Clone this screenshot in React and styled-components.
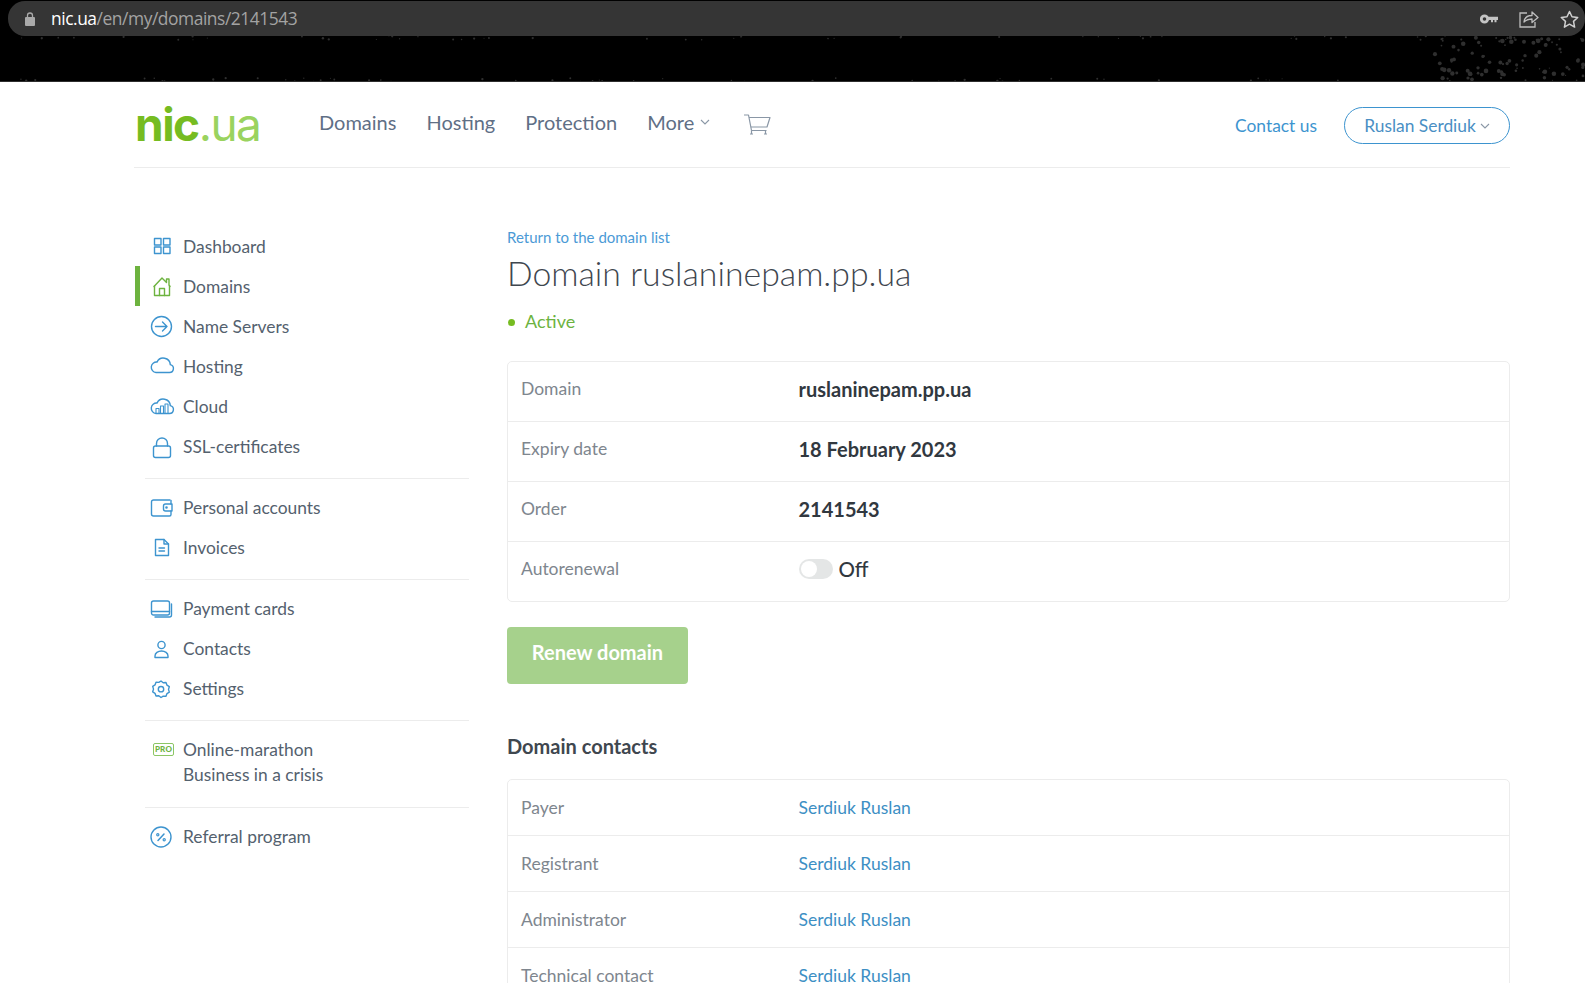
import React from 'react';
import styled, { createGlobalStyle } from 'styled-components';

const GlobalStyle = createGlobalStyle`
  html, body {
    margin: 0;
    padding: 0;
    height: 983px;
    overflow: hidden;
    background: #fff;
    font-family: Lato, "Open Sans", sans-serif;
    color: #54616e;
  }
  * { box-sizing: border-box; }
`;

const BLUE = '#3d94cf';

const IconSvg = styled.svg`
  overflow: visible;
`;

const Icon = ({ children, color = BLUE }) => (
  <IconSvg width="24" height="24" viewBox="0 0 24 24" fill="none" stroke={color} strokeWidth="1.4" strokeLinejoin="round" strokeLinecap="round">
    {children}
  </IconSvg>
);

const CLOUD = 'M6 18.500h13.500a4 4 0 0 0 .8-7.900 7 7 0 0 0-13.300-2.500A5.200 5.200 0 0 0 6 18.500Z';

const icons = {
  dashboard: (
    <Icon>
      <rect x="4.500" y="4.500" width="6.500" height="6.500" />
      <rect x="13.500" y="4.500" width="6.500" height="6.500" />
      <rect x="4.500" y="13" width="6.500" height="6.500" />
      <rect x="13.500" y="13" width="6.500" height="6.500" />
    </Icon>
  ),
  home: (
    <Icon color="#6db33f">
      <path d="M4 12.500 12 4l4.500 4.500V5h2.500v6l1 1.500" />
      <path d="M4.500 12v9.500h15V12" />
      <path d="M9.500 21.500v-7h5v7" />
    </Icon>
  ),
  servers: (
    <Icon>
      <circle cx="11.500" cy="12.500" r="10" />
      <path d="M5.500 12.500h11.500M12.500 8 17 12.500 12.500 17" />
    </Icon>
  ),
  hosting: (
    <Icon>
      <path d={CLOUD} />
    </Icon>
  ),
  cloud: (
    <Icon>
      <path d={CLOUD} transform="translate(0 1)" />
      <path d="M6 19v-4.500h3V19M10.500 19v-7h3v7M15 19v-9h3v9" strokeWidth="1.100" />
    </Icon>
  ),
  lock: (
    <Icon>
      <rect x="3.500" y="12" width="17" height="11.500" rx="2" />
      <path d="M6.500 12v-2.500a5.500 5.500 0 0 1 11 0V12" />
    </Icon>
  ),
  wallet: (
    <Icon>
      <path d="M20 5H3.500A2 2 0 0 0 1.500 7v12a2 2 0 0 0 2 2h16a1.500 1.500 0 0 0 1.500-1.500V16" />
      <path d="M22 9H15.500a2 2 0 0 0-2 2v3a2 2 0 0 0 2 2H22Z" />
      <circle cx="16.500" cy="12.500" r=".6" />
      <path d="M21 5.500V9" />
    </Icon>
  ),
  invoice: (
    <Icon>
      <path d="M5.500 4.500h8.500l4.500 4.500v11.500h-13Z" />
      <path d="M14 4.500V9h4.500M9 13h5.500M9 16h5.500" />
    </Icon>
  ),
  cards: (
    <Icon>
      <rect x="1.500" y="5" width="18" height="14" rx="2" />
      <path d="M1.500 15.500h18M21.500 8v11a2 2 0 0 1-2 2H5" />
    </Icon>
  ),
  contact: (
    <Icon>
      <circle cx="11.500" cy="9" r="3.600" />
      <path d="M5 21.500V20c0-3 3-5 6.500-5s6.500 2 6.500 5v1.500Z" />
    </Icon>
  ),
  settings: (
    <Icon>
      <g transform="translate(-1 1)">
        <path d="M12 4l2.200 1.700 2.800-.2 1 2.700 2.300 1.500-.8 2.700.8 2.700-2.300 1.500-1 2.700-2.800-.2L12 20.500l-2.200-1.700-2.800.2-1-2.700-2.300-1.500.8-2.700-.8-2.700 2.300-1.500 1-2.700 2.800.2Z" />
        <circle cx="12" cy="12.200" r="2.700" />
      </g>
    </Icon>
  ),
  percent: (
    <Icon>
      <g transform="translate(-1 1)">
        <circle cx="12" cy="12" r="10" />
        <path d="M9 15.500 15 9" strokeWidth="1.500" />
        <circle cx="8.800" cy="9.800" r="1.100" strokeWidth="1.200" />
        <circle cx="15.200" cy="14.700" r="1.100" strokeWidth="1.200" />
      </g>
    </Icon>
  ),
};

const menuGroups = [
  [
    { label: 'Dashboard', icon: 'dashboard' },
    { label: 'Domains', icon: 'home', active: true },
    { label: 'Name Servers', icon: 'servers' },
    { label: 'Hosting', icon: 'hosting' },
    { label: 'Cloud', icon: 'cloud' },
    { label: 'SSL-certificates', icon: 'lock' },
  ],
  [
    { label: 'Personal accounts', icon: 'wallet' },
    { label: 'Invoices', icon: 'invoice' },
  ],
  [
    { label: 'Payment cards', icon: 'cards' },
    { label: 'Contacts', icon: 'contact' },
    { label: 'Settings', icon: 'settings' },
  ],
  [{ label: 'Online-marathon', second: 'Business in a crisis', pro: true }],
  [{ label: 'Referral program', icon: 'percent' }],
];

// seeded specks for the wallpaper showing behind the address bar
const rnd = (n) => {
  const v = Math.sin(n * 127.1 + 11.7) * 43758.5453;
  return v - Math.floor(v);
};
const specks = Array.from({ length: 210 }, (_, i) => {
  if (i < 90) {
    return { x: 1430 + rnd(i) * 155, y: 37 + rnd(i + 500) * 44, r: 0.6 + rnd(i + 900) * 1.8 };
  }
  return {
    x: rnd(i) * 1585,
    y: i % 2 ? 36 + rnd(i + 500) * 4 : 78 + rnd(i + 500) * 4,
    r: 0.5 + rnd(i + 900) * 0.7,
  };
});

const Page = styled.div`
  width: 1585px;
  height: 983px;
  overflow: hidden;
`;

const BrowserBar = styled.div`
  position: relative;
  height: 82px;
  background: #000;
  padding: 1px 0 0 8px;
  border-bottom: 1px solid #2e2e2e;
`;

const Specks = styled.svg`
  position: absolute;
  left: 0;
  top: 0;
`;

const AddressBar = styled.div`
  position: relative;
  z-index: 1;
  height: 35px;
  display: flex;
  align-items: center;
  padding: 0 6px 0 16px;
  background: #353535;
  border-radius: 17px;
  font-family: "Open Sans", sans-serif;
`;

const Url = styled.div`
  margin-left: 15px;
  flex: 1;
  margin-top: -1px;
  font-size: 17.400px;
  letter-spacing: -0.45px;
  color: #a3a3a3;
  b {
    font-weight: 400;
    color: #fff;
  }
`;

const BarIcons = styled.div`
  display: flex;
  align-items: center;
  gap: 21px;
`;

const Container = styled.div`
  width: 1376px;
  margin-left: 134px;
`;

const Header = styled.header`
  height: 86px;
  display: flex;
  align-items: center;
  border-bottom: 1px solid #ececec;
`;

const Logo = styled.div`
  width: 185px;
  margin-top: -2px;
  padding-left: 1px;
  font-family: Inter, Lato, sans-serif;
  font-size: 46px;
  line-height: 1;
  letter-spacing: -1.5px;
  font-weight: 400;
  color: #9ad35f;
  b {
    font-weight: 700;
    color: #76bc21;
  }
`;

const Nav = styled.nav`
  display: flex;
  align-items: center;
  gap: 30px;
  margin-top: -5px;
`;

const NavItem = styled.span`
  display: flex;
  align-items: center;
  gap: 6px;
  font-size: 20px;
  color: #5f6f86;
`;

const Cart = styled.span`
  display: flex;
  margin: 6px 0 0 3px;
`;

const Right = styled.div`
  margin: 2px 0 0 auto;
  display: flex;
  align-items: center;
  gap: 27px;
`;

const Contact = styled.span`
  font-size: 17.400px;
  color: ${BLUE};
`;

const UserButton = styled.span`
  width: 166px;
  height: 37px;
  display: flex;
  align-items: center;
  justify-content: center;
  gap: 4px;
  border: 1px solid ${BLUE};
  border-radius: 19px;
  font-size: 17.400px;
  color: #4a8fc4;
`;

const Columns = styled.div`
  display: flex;
  padding-top: 59px;
`;

const Sidebar = styled.aside`
  width: 335px;
  margin: -1px 38px 0 0;
  flex: none;
`;

const MenuGroup = styled.div`
  padding: ${(p) => (p.$first ? '0 0 12px' : '8px 0 12px')};
  margin-left: 11px;
  border-bottom: ${(p) => (p.$last ? 'none' : '1px solid #ececec')};
`;

const MenuRow = styled.div`
  position: relative;
  min-height: 40px;
  display: flex;
  align-items: flex-start;
  padding: 8px 0 ${(p) => (p.$multi ? '8px' : '0')};
  font-size: 17.400px;
  line-height: 25px;
  color: #54616e;
  &::before {
    content: '';
    display: ${(p) => (p.$active ? 'block' : 'none')};
    position: absolute;
    left: -10px;
    top: 0;
    bottom: 0;
    width: 5px;
    background: #6db33f;
  }
`;

const MenuIcon = styled.span`
  width: 38px;
  height: 24px;
  flex: none;
  display: flex;
  align-items: center;
  padding-left: ${(p) => (p.$pro ? '8px' : '5px')};
`;

const ProBadge = styled.span`
  display: inline-flex;
  align-items: center;
  justify-content: center;
  width: 21px;
  height: 13px;
  border: 1.5px solid #8cc665;
  border-radius: 2px;
  font-size: 8px;
  font-weight: 900;
  letter-spacing: 0.2px;
  color: #6db33f;
`;

const Main = styled.main`
  flex: 1;
  min-width: 0;
`;

const BackLink = styled.div`
  font-size: 15px;
  line-height: 18px;
  margin-top: 1px;
  color: #4b9ad6;
`;

const Title = styled.h1`
  margin: 5px 0 0;
  font-size: 33.800px;
  line-height: 44px;
  font-weight: 300;
  color: #3f474f;
`;

const Status = styled.div`
  display: flex;
  align-items: center;
  gap: 10px;
  margin: 14px 0 0 1px;
  height: 24px;
  font-size: 18px;
  color: #6db33f;
  &::before {
    content: '';
    width: 7px;
    height: 7px;
    margin-top: 2px;
    border-radius: 50%;
    background: #76bc21;
  }
`;

const Card = styled.div`
  margin-top: ${(p) => p.$top}px;
  border: 1px solid #ececec;
  border-radius: 5px;
`;

const Row = styled.div`
  height: ${(p) => p.$height}px;
  display: flex;
  align-items: center;
  padding-left: 13px;
  border-bottom: ${(p) => (p.$last ? 'none' : '1px solid #ececec')};
`;

const Label = styled.div`
  width: 277.500px;
  font-size: 17.500px;
  color: #7e868e;
  margin-top: ${(p) => (p.$strong ? '-7px' : '0')};
`;

const Value = styled.div`
  display: flex;
  align-items: center;
  margin-top: -5px;
  font-size: 20px;
  font-weight: 700;
  color: #31383f;
`;

const ContactLink = styled.span`
  font-size: 17.500px;
  color: #3d8fc4;
`;

const Toggle = styled.span`
  position: relative;
  display: block;
  width: 34px;
  height: 20px;
  margin-right: 6px;
  border-radius: 10px;
  background: #e4e6e6;
  &::after {
    content: '';
    position: absolute;
    left: 2px;
    top: 2px;
    width: 16px;
    height: 16px;
    border-radius: 50%;
    background: #fff;
  }
`;

const OffText = styled.span`
  font-weight: 500;
  font-size: 20.500px;
`;

const RenewButton = styled.div`
  width: 181px;
  height: 57px;
  margin-top: 25px;
  padding-bottom: 8px;
  display: flex;
  align-items: center;
  justify-content: center;
  border-radius: 4px;
  background: #a6d18c;
  font-size: 20px;
  font-weight: 700;
  color: #fff;
`;

const SectionTitle = styled.h2`
  margin: 49px 0 0;
  font-size: 20px;
  line-height: 26px;
  font-weight: 700;
  color: #3f474f;
`;

const Chevron = () => (
  <svg width="10" height="6" viewBox="0 0 10 6" fill="none" stroke="#8a97a6" strokeWidth="1.100">
    <path d="M1 1l4 4 4-4" />
  </svg>
);

function App() {
  return (
    <Page>
      <GlobalStyle />
      <BrowserBar>
        <Specks width="1585" height="82">
          {specks.map((s, i) => (
            <circle key={i} cx={s.x} cy={s.y} r={s.r} fill="#2f2f2f" />
          ))}
        </Specks>
        <AddressBar>
          <svg width="12" height="14" viewBox="0 0 12 14">
            <rect x="1" y="5" width="10" height="9" rx="1" fill="#a9a9a9" />
            <path d="M3.500 5V3.500a2.500 2.500 0 0 1 5 0V5" fill="none" stroke="#a9a9a9" strokeWidth="1.300" />
          </svg>
          <Url>
            <b>nic.ua</b>/en/my/domains/2141543
          </Url>
          <BarIcons>
            <svg width="18" height="10" viewBox="0 0 18 10">
              <circle cx="4.500" cy="5" r="3.200" fill="none" stroke="#c4c4c4" strokeWidth="2.800" />
              <path d="M8 2.800h10v3.200h-1.500v2.200h-2V6h-1.500v2.200h-2V6H8Z" fill="#c4c4c4" />
            </svg>
            <svg width="20" height="19" viewBox="0 0 20 19" fill="none" stroke="#bdbdbd" strokeWidth="1.300">
              <path d="M8 4H1v14h15v-5" />
              <path d="M5 13c.5-4.500 4-6.500 8-6.500V3l6 5.500-6 5V10c-3.500 0-6 1-8 3Z" strokeLinejoin="round" />
            </svg>
            <svg width="19" height="18" viewBox="0 0 19 18" fill="none" stroke="#d0d0d0" strokeWidth="1.500">
              <path d="M9.500 1.500 12 6.800l5.700.7-4.200 3.900 1.100 5.700-5.100-2.900-5.100 2.900 1.100-5.700L1.300 7.500 7 6.800Z" strokeLinejoin="round" />
            </svg>
          </BarIcons>
        </AddressBar>
      </BrowserBar>
      <Container>
        <Header>
          <Logo>
            <b>nic</b>.ua
          </Logo>
          <Nav>
            <NavItem>Domains</NavItem>
            <NavItem>Hosting</NavItem>
            <NavItem>Protection</NavItem>
            <NavItem>
              More <Chevron />
            </NavItem>
            <Cart>
              <svg width="28" height="24" viewBox="0 0 28 24" fill="none" stroke="#8a97a6" strokeWidth="1.200" strokeLinejoin="round">
                <path d="M1 2h4.500l3 15.500h15" />
                <path d="M6 4.500h21l-3 9.500H7.800" />
                <path d="M8.500 17.500v3M22.500 17.500v3M7 21h3M21 21h3" />
              </svg>
            </Cart>
          </Nav>
          <Right>
            <Contact>Contact us</Contact>
            <UserButton>
              Ruslan Serdiuk <Chevron />
            </UserButton>
          </Right>
        </Header>
        <Columns>
          <Sidebar>
            {menuGroups.map((group, g) => (
              <MenuGroup key={g} $first={g === 0} $last={g === menuGroups.length - 1}>
                {group.map((item) => (
                  <MenuRow key={item.label} $active={item.active} $multi={!!item.second}>
                    <MenuIcon $pro={item.pro}>{item.pro ? <ProBadge>PRO</ProBadge> : icons[item.icon]}</MenuIcon>
                    <div>
                      {item.label}
                      {item.second && <div>{item.second}</div>}
                    </div>
                  </MenuRow>
                ))}
              </MenuGroup>
            ))}
          </Sidebar>
          <Main>
            <BackLink>Return to the domain list</BackLink>
            <Title>Domain ruslaninepam.pp.ua</Title>
            <Status>Active</Status>
            <Card $top={28}>
              <Row $height={60}>
                <Label $strong>Domain</Label>
                <Value>ruslaninepam.pp.ua</Value>
              </Row>
              <Row $height={60}>
                <Label $strong>Expiry date</Label>
                <Value>18 February 2023</Value>
              </Row>
              <Row $height={60}>
                <Label $strong>Order</Label>
                <Value>2141543</Value>
              </Row>
              <Row $height={59} $last>
                <Label $strong>Autorenewal</Label>
                <Value>
                  <Toggle />
                  <OffText>Off</OffText>
                </Value>
              </Row>
            </Card>
            <RenewButton>Renew domain</RenewButton>
            <SectionTitle>Domain contacts</SectionTitle>
            <Card $top={20}>
              {['Payer', 'Registrant', 'Administrator', 'Technical contact'].map((role) => (
                <Row key={role} $height={56}>
                  <Label>{role}</Label>
                  <ContactLink>Serdiuk Ruslan</ContactLink>
                </Row>
              ))}
            </Card>
          </Main>
        </Columns>
      </Container>
    </Page>
  );
}

export default App;
